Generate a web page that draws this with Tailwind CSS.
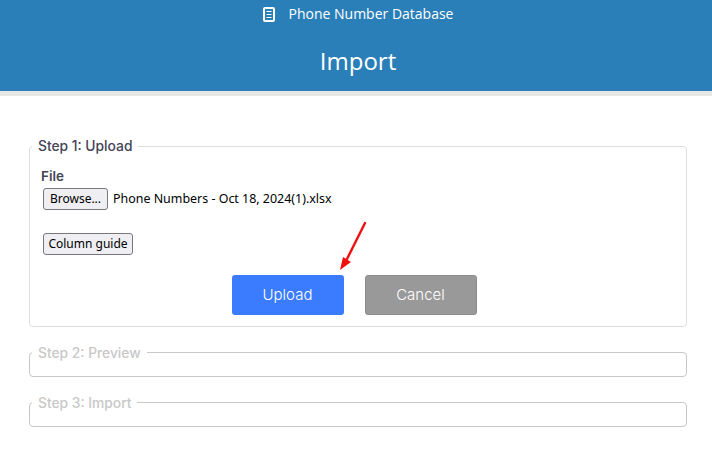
<!DOCTYPE html>
<html><head><meta charset="utf-8"><script src="https://cdn.jsdelivr.net/npm/@tailwindcss/browser@4"></script></head>
<body class="bg-white w-[712px] h-[456px] overflow-hidden font-['Inter',sans-serif]">
<header class="h-[96px] bg-[#2a7fb8] border-b-[5px] border-[#e7e7e7] text-white flex flex-col items-center pl-[4px] font-['Open_Sans',sans-serif]">
  <div class="h-[28px] flex items-center gap-[14px] text-[14px] leading-none">
    <svg width="12" height="15" viewBox="0 0 12 15" fill="none" stroke="#fff"><rect x="1" y="1" width="10" height="13" rx="1" stroke-width="2"/><path d="M3.5 4.5h5M3.5 7.5h5M3.5 10.5h5" stroke-width="1"/></svg>
    <span>Phone Number Database</span>
  </div>
  <h1 class="mt-[3px] text-[24px] leading-[60px] h-[60px] font-normal">Import</h1>
</header>
<main class="pl-[29px] pr-[25px] pt-[42px] flex flex-col gap-[17px]">
  <fieldset class="border border-[#dedede] rounded-[4px] pl-[11px] pr-[8px] h-[189px]">
    <legend class="text-[13.8px] leading-[17px] font-medium text-[#444455] px-[6px] -ml-[9px] h-[17px]">Step 1: Upload</legend>
    <div class="text-[13.5px] leading-[18px] font-semibold text-[#444455] mt-[12px]">File</div>
    <div class="flex items-center gap-[5px] ml-[2px] mt-[3px] font-['Noto_Sans',sans-serif] text-[12.45px] text-black">
      <button class="h-[22px] w-[65px] bg-[#efeff3] border border-[#77777c] rounded-[3px] leading-none text-[12px]">Browse...</button>
      <span>Phone Numbers - Oct 18, 2024(1).xlsx</span>
    </div>
    <button class="block mt-[23px] ml-[2px] h-[22px] w-[90px] bg-[#efeff3] border border-[#77777c] rounded-[3px] font-['Noto_Sans',sans-serif] text-[12px] leading-none text-black">Column guide</button>
    <div class="flex justify-center gap-[21px] mt-[20px] pr-[11px]">
      <button class="w-[112px] h-[40px] rounded-[3px] bg-[#3b7cff] text-white text-[15px] font-light">Upload</button>
      <button class="w-[112px] h-[40px] rounded-[3px] bg-[#999999] border border-[#8c8c8c] text-white text-[15px] font-light">Cancel</button>
    </div>
  </fieldset>
  <fieldset class="border border-[#c8c8c8] rounded-[4px] h-[33px]">
    <legend class="text-[13.8px] leading-[19px] font-medium text-[#c8c8c8] px-[6px] ml-[2px] h-[17px]">Step 2: Preview</legend>
  </fieldset>
  <fieldset class="border border-[#c8c8c8] rounded-[4px] h-[33px]">
    <legend class="text-[13.8px] leading-[19px] font-medium text-[#c8c8c8] px-[6px] ml-[2px] h-[17px]">Step 3: Import</legend>
  </fieldset>
</main>
<svg class="absolute left-[335px] top-[218px]" width="35" height="56" viewBox="0 0 35 56" fill="none"><path d="M30 5L12 41" stroke="#f01010" stroke-width="2.4" stroke-linecap="round"/><path d="M5 52L8 39L16 44Z" fill="#f01010"/></svg>
</body></html>
